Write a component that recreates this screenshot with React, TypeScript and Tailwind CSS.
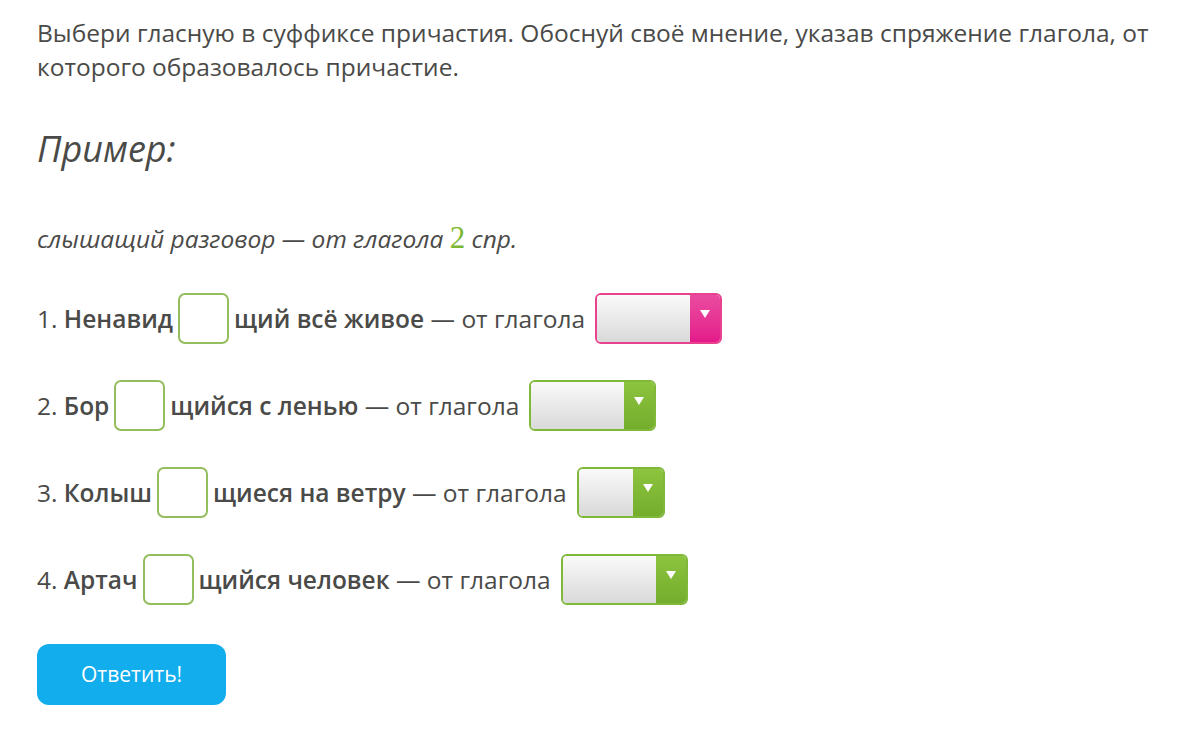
import React from 'react';

type Row = {
  num: string;
  stem: string;
  rest: string;
  selectW: string;
  pink?: boolean;
};

const ROWS: Row[] = [
  { num: '1.', stem: 'Ненавид', rest: 'щий всё живое', selectW: 'w-[127px]', pink: true },
  { num: '2.', stem: 'Бор', rest: 'щийся с ленью', selectW: 'w-[127px]' },
  { num: '3.', stem: 'Колыш', rest: 'щиеся на ветру', selectW: 'w-[88px]' },
  { num: '4.', stem: 'Артач', rest: 'щийся человек', selectW: 'w-[127px]' },
];

function LetterBox() {
  return (
    <span className="mx-[5px] inline-block h-[51px] w-[51px] shrink-0 rounded-[7px] border-2 border-[#94bd5e] bg-white" />
  );
}

function Select({ width, pink }: { width: string; pink?: boolean }) {
  return (
    <span
      className={
        'ml-[10px] flex h-[51px] shrink-0 overflow-hidden rounded-[6px] border-2 ' +
        width +
        (pink ? ' border-[#e8428f]' : ' border-[#80b83a]')
      }
    >
      <span className="flex-1 bg-gradient-to-b from-[#fafafa] to-[#d9d9d9]" />
      <span
        className={
          'flex w-[30px] items-start justify-center pt-[15px] ' +
          (pink ? 'bg-gradient-to-b from-[#ea4aa0] to-[#e4198a]' : 'bg-gradient-to-b from-[#8cc43f] to-[#74ad2c]')
        }
      >
        <svg width="10" height="8" viewBox="0 0 10 8">
          <path d="M0 0 L10 0 L5 8 Z" fill="#ffffff" />
        </svg>
      </span>
    </span>
  );
}

export default function App() {
  return (
    <div className="min-h-[740px] w-[1200px] bg-white pl-[37px] pt-[16px] text-[#4a4a48] font-['Open_Sans','Noto_Sans',sans-serif]">
      <p className="text-[24.5px] leading-[34px] pr-[30px]">
        Выбери гласную в суффиксе причастия. Обоснуй своё мнение, указав спряжение глагола, от которого образовалось причастие.
      </p>

      <h2 className="mt-[43px] text-[36px] italic leading-[44px]">Пример:</h2>

      <p className="mt-[50px] text-[24.5px] italic leading-[34px]">
        слышащий разговор — от глагола{' '}
        <span className="font-['Liberation_Serif',serif] not-italic text-[31px] text-[#7cb82f]">2</span> спр.
      </p>

      <div className="mt-[37px] flex flex-col gap-[36px]">
        {ROWS.map((r) => (
          <div key={r.num} className="flex items-center text-[24.5px] leading-[34px]">
            <span>{r.num}&nbsp;</span>
            <span className="font-semibold">{r.stem}</span>
            <LetterBox />
            <span className="font-semibold">{r.rest}</span>
            <span>&nbsp;— от глагола</span>
            <Select width={r.selectW} pink={r.pink} />
          </div>
        ))}
      </div>

      <button className="mt-[39px] h-[61px] w-[189px] rounded-[12px] bg-[#11adec] text-[21px] text-white">
        Ответить!
      </button>
    </div>
  );
}
